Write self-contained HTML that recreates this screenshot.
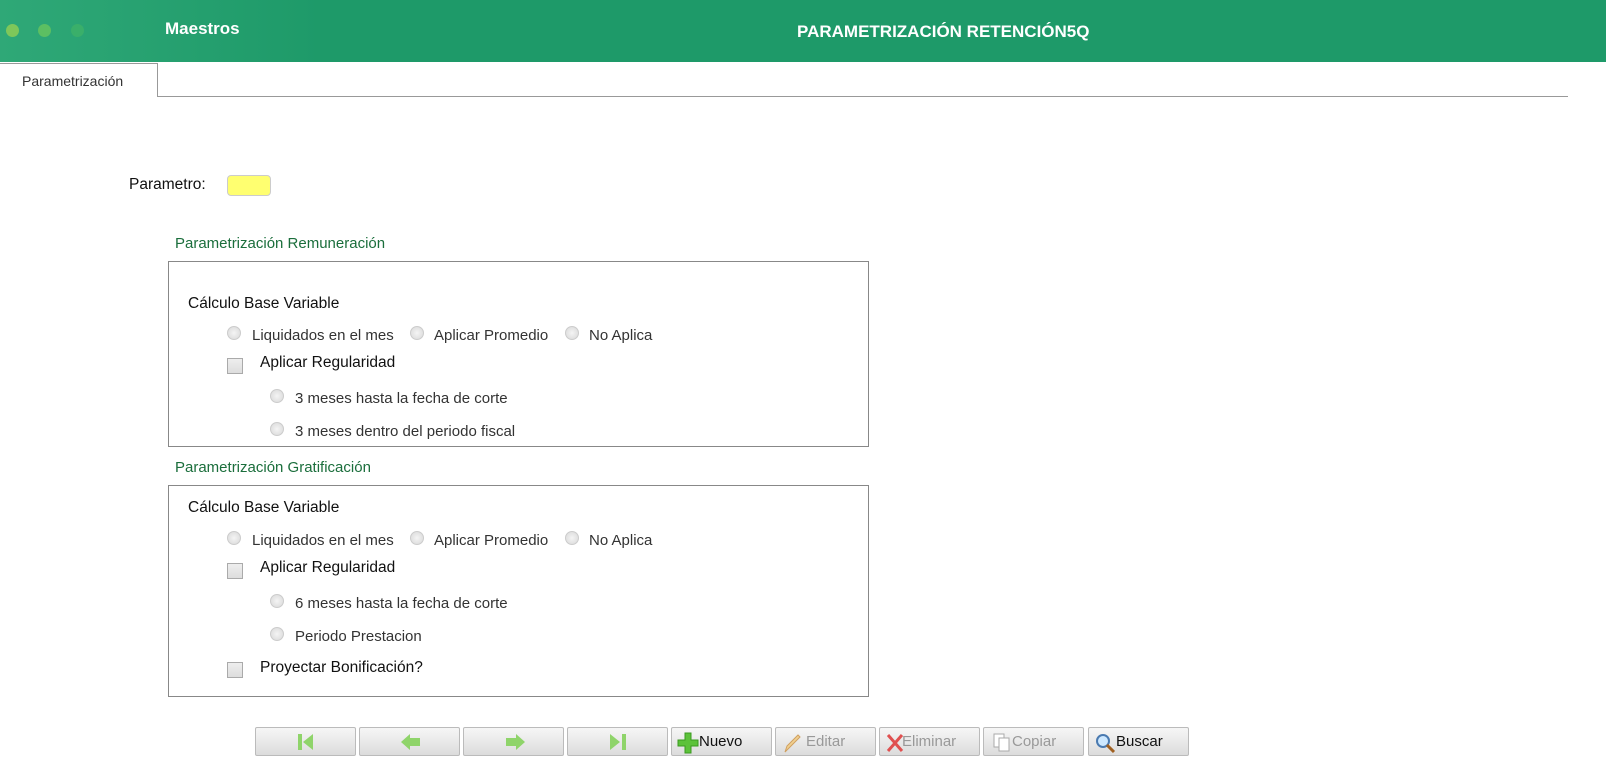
<!DOCTYPE html>
<html><head><meta charset="utf-8"><style>
*{margin:0;padding:0;box-sizing:border-box}
body{width:1606px;height:775px;background:#fff;font-family:"Liberation Sans",sans-serif;position:relative;overflow:hidden;color:#000}
.hdr{position:absolute;left:0;top:0;width:1606px;height:62px;background:linear-gradient(90deg,#2fa877 0%,#1e9a69 20%,#1e9a69 100%)}
.dot{position:absolute;top:24px;width:13px;height:13px;border-radius:50%}
.a{position:absolute;white-space:nowrap}
.tab{position:absolute;left:0;top:63px;width:158px;height:34px;border:1px solid #999;border-bottom:none;border-left:none;background:#fff;font-size:14px;color:#333;padding:9px 0 0 22px}
.line{position:absolute;left:158px;top:96px;width:1410px;height:1px;background:#999}
.box{position:absolute;left:168px;width:701px;border:1px solid #888}
.rad{position:absolute;width:14px;height:14px;border-radius:50%;background:radial-gradient(#f4f4f4,#d8d8d8);border:1px solid #ccc}
.chk{position:absolute;width:16px;height:16px;border:1px solid #aaa;background:linear-gradient(#eee,#ddd)}
.t{font-size:15px;color:#333}
.tb{font-size:15.5px;color:#111}
.g{font-size:15px;color:#1b6e3c}
.btn{position:absolute;top:727px;width:101px;height:29px;border:1px solid #bbb;border-radius:2px;background:linear-gradient(#f6f6f6,#dcdcdc);font-size:15px;color:#999}
.btn span{position:absolute;top:5px}
</style></head><body>
<div class="hdr">
<div class="dot" style="left:6px;background:#7ec75a"></div>
<div class="dot" style="left:38px;background:#5cbf62"></div>
<div class="dot" style="left:71px;background:#3aaf6a"></div>
<div class="a" style="left:165px;top:19px;color:#fff;font-weight:bold;font-size:17px">Maestros</div>
<div class="a" style="left:797px;top:22px;color:#fff;font-weight:bold;font-size:17px">PARAMETRIZACIÓN RETENCIÓN5Q</div>
</div>
<div class="tab">Parametrización</div>
<div class="line"></div>
<div class="a tb" style="left:129px;top:176px">Parametro:</div>
<div class="a" style="left:227px;top:175px;width:44px;height:21px;background:#ffff70;border:1px solid #ccc;border-radius:4px"></div>
<div class="a g" style="left:175px;top:235px">Parametrización Remuneración</div>
<div class="box" style="top:261px;height:186px"></div>
<div class="a tb" style="left:188px;top:295px">Cálculo Base Variable</div>
<div class="rad" style="left:227px;top:326px"></div><div class="a t" style="left:252px;top:327px">Liquidados en el mes</div>
<div class="rad" style="left:410px;top:326px"></div><div class="a t" style="left:434px;top:327px">Aplicar Promedio</div>
<div class="rad" style="left:565px;top:326px"></div><div class="a t" style="left:589px;top:327px">No Aplica</div>
<div class="chk" style="left:227px;top:358px"></div><div class="a tb" style="left:260px;top:354px">Aplicar Regularidad</div>
<div class="rad" style="left:270px;top:389px"></div><div class="a t" style="left:295px;top:390px">3 meses hasta la fecha de corte</div>
<div class="rad" style="left:270px;top:422px"></div><div class="a t" style="left:295px;top:423px">3 meses dentro del periodo fiscal</div>
<div class="a g" style="left:175px;top:459px">Parametrización Gratificación</div>
<div class="box" style="top:485px;height:212px"></div>
<div class="a tb" style="left:188px;top:499px">Cálculo Base Variable</div>
<div class="rad" style="left:227px;top:531px"></div><div class="a t" style="left:252px;top:532px">Liquidados en el mes</div>
<div class="rad" style="left:410px;top:531px"></div><div class="a t" style="left:434px;top:532px">Aplicar Promedio</div>
<div class="rad" style="left:565px;top:531px"></div><div class="a t" style="left:589px;top:532px">No Aplica</div>
<div class="chk" style="left:227px;top:563px"></div><div class="a tb" style="left:260px;top:559px">Aplicar Regularidad</div>
<div class="rad" style="left:270px;top:594px"></div><div class="a t" style="left:295px;top:595px">6 meses hasta la fecha de corte</div>
<div class="rad" style="left:270px;top:627px"></div><div class="a t" style="left:295px;top:628px">Periodo Prestacion</div>
<div class="chk" style="left:227px;top:662px"></div><div class="a tb" style="left:260px;top:659px">Proyectar Bonificación?</div>

<div class="btn" style="left:255px"><svg style="position:absolute;left:40px;top:5px" width="20" height="18"><rect x="2" y="1" width="4" height="16" fill="#8fd46a"/><path d="M7 9 L17 1 V17Z" fill="#8fd46a"/></svg></div>
<div class="btn" style="left:359px"><svg style="position:absolute;left:40px;top:5px" width="22" height="18"><path d="M1 9 L10 1 V5 H20 V13 H10 V17Z" fill="#8fd46a"/></svg></div>
<div class="btn" style="left:463px"><svg style="position:absolute;left:40px;top:5px" width="22" height="18"><path d="M21 9 L12 1 V5 H2 V13 H12 V17Z" fill="#8fd46a"/></svg></div>
<div class="btn" style="left:567px"><svg style="position:absolute;left:40px;top:5px" width="20" height="18"><path d="M2 1 L12 9 L2 17Z" fill="#8fd46a"/><rect x="14" y="1" width="4" height="16" fill="#8fd46a"/></svg></div>
<div class="btn" style="left:671px;color:#111"><svg style="position:absolute;left:5px;top:4px" width="22" height="22"><path d="M8 1H14V8H21V14H14V21H8V14H1V8H8Z" fill="#5cc23a" stroke="#3a9a20"/></svg><span style="left:27px">Nuevo</span></div>
<div class="btn" style="left:775px"><svg style="position:absolute;left:6px;top:5px" width="20" height="20"><path d="M3 19 L5 13 L16 2 L18 4 L7 15Z" fill="#f0d090" stroke="#d0a060"/></svg><span style="left:30px">Editar</span></div>
<div class="btn" style="left:879px"><svg style="position:absolute;left:6px;top:5px" width="18" height="20"><path d="M2 2 L16 18 M16 2 L2 18" stroke="#e05050" stroke-width="3"/></svg><span style="left:22px">Eliminar</span></div>
<div class="btn" style="left:983px"><svg style="position:absolute;left:8px;top:5px" width="20" height="20"><rect x="2" y="1" width="10" height="13" fill="#fff" stroke="#aaa"/><rect x="7" y="5" width="10" height="13" fill="#fff" stroke="#aaa"/></svg><span style="left:28px">Copiar</span></div>
<div class="btn" style="left:1088px;color:#111"><svg style="position:absolute;left:5px;top:4px" width="22" height="22"><circle cx="9" cy="9" r="6" fill="#cde8ff" stroke="#4a7ab0" stroke-width="2"/><path d="M13 13 L20 20" stroke="#a06020" stroke-width="3"/></svg><span style="left:27px">Buscar</span></div>
</body></html>
